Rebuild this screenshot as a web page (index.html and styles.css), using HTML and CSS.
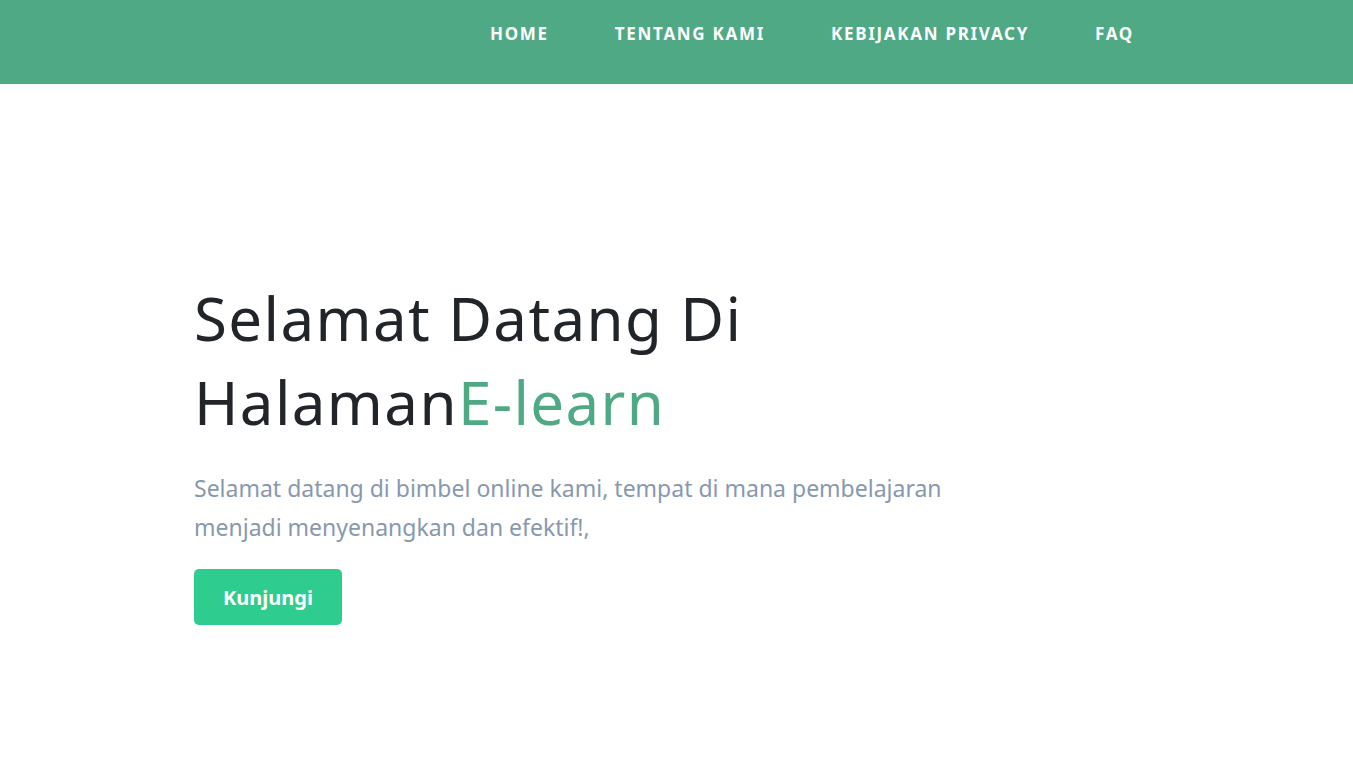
FILE: index.html
```html
<!DOCTYPE html>
<html lang="id">
<head>
<meta charset="utf-8">
<title>E-learn</title>
<link rel="stylesheet" href="styles.css">
</head>
<body>
<header class="topbar">
  <nav class="nav">
    <a class="nav-link" href="#">HOME</a>
    <a class="nav-link" href="#">TENTANG KAMI</a>
    <a class="nav-link" href="#">KEBIJAKAN PRIVACY</a>
    <a class="nav-link" href="#">FAQ</a>
  </nav>
</header>
<main class="hero">
  <h1 class="hero-title">Selamat Datang Di<br>Halaman<span class="accent">E-learn</span></h1>
  <p class="hero-text">Selamat datang di bimbel online kami, tempat di mana pembelajaran<br>menjadi menyenangkan dan efektif!,</p>
  <a class="btn" href="#">Kunjungi</a>
</main>
</body>
</html>
```
FILE: styles.css
```css
* { box-sizing: border-box; }
html, body { margin: 0; padding: 0; }
body {
  font-family: "Noto Sans", Lato, sans-serif;
  background: #ffffff;
  color: #212529;
}
.topbar {
  height: 84px;
  background: #4fa985;
  padding-top: 24px;
}
.nav {
  display: flex;
  gap: 66px;
  margin-left: 490px;
}
.nav-link {
  color: #ffffff;
  text-decoration: none;
  font-weight: 700;
  font-size: 17px;
  line-height: 20px;
  letter-spacing: 1.7px;
}
.hero {
  padding: 192px 0 0 194px;
}
.hero-title {
  margin: 0;
  font-size: 60px;
  line-height: 84px;
  font-weight: 400;
  letter-spacing: 1.4px;
  color: #212529;
}
.accent { color: #4fa985; }
.hero-text {
  margin: 25px 0 22px;
  font-size: 23px;
  line-height: 39px;
  color: #8898ae;
}
.btn {
  display: inline-flex;
  align-items: center;
  justify-content: center;
  width: 148px;
  height: 56px;
  background: #2ecc8f;
  color: #ffffff;
  border-radius: 5px;
  text-decoration: none;
  font-weight: 700;
  font-size: 20px;
}
```
